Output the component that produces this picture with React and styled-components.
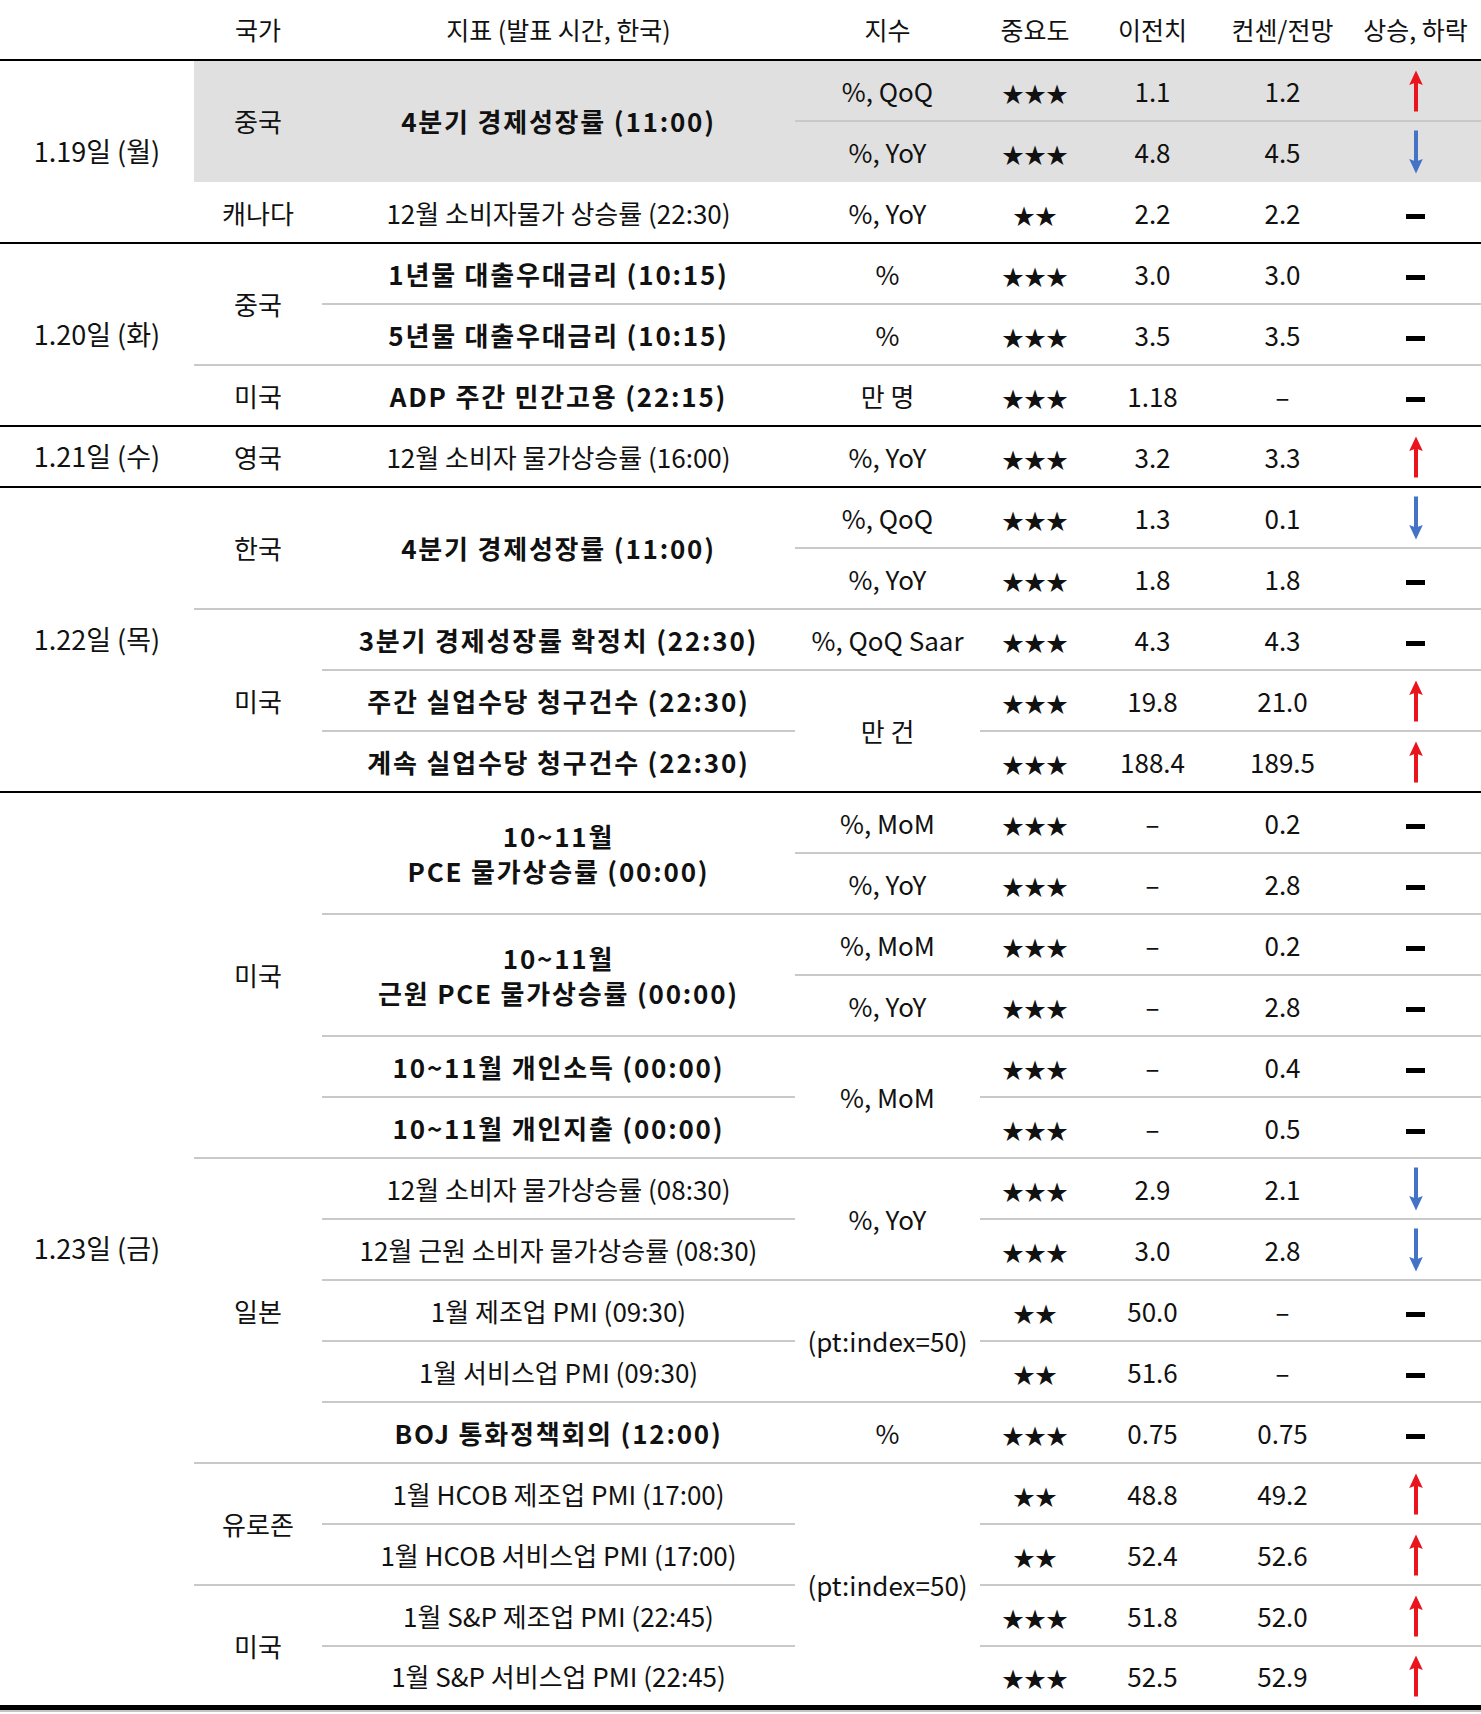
import React from "react";
import styled, { createGlobalStyle } from "styled-components";

const GlobalStyle = createGlobalStyle`
  html, body { margin: 0; padding: 0; background: #fff; }
  * { box-sizing: border-box; }
`;

const Frame = styled.div`
  width: 1481px;
  border-bottom: 2px solid #c4c4c4;
`;

const Table = styled.table`
  width: 1481px;
  border-collapse: collapse;
  table-layout: fixed;
  font-family: "Noto Sans CJK KR", "Noto Sans", sans-serif;
  color: #111;
  font-size: 26px;
`;

const HeadCell = styled.th`
  height: 60px;
  padding: 0 0 2px;
  font-weight: 400;
  font-size: 25px;
  text-align: center;
  vertical-align: middle;
  border-bottom: 2.5px solid #000;
  white-space: nowrap;
`;

const lines = {
  gray: "2px solid #c9c9c9",
  black: "2.5px solid #000",
  end: "5px solid #000",
  none: "2px solid transparent",
};

const Cell = styled.td`
  height: 61px;
  padding: 0;
  text-align: center;
  vertical-align: middle;
  white-space: pre-line;
  line-height: 1.36;
  background: ${(p) => (p.$shade ? "#e0e0e0" : "transparent")};
  border-bottom: ${(p) => lines[p.$line]};
  font-weight: ${(p) => (p.$bold ? 700 : 400)};
  letter-spacing: ${(p) => (p.$bold ? "1.8px" : "0")};
`;

const DateCell = styled(Cell)`
  font-size: 27px;
`;

const Stars = styled.span`
  font-size: 22px;
  letter-spacing: 0;
  font-family: "Noto Sans CJK KR", sans-serif;
`;

const Flat = styled.span`
  display: inline-block;
  width: 19px;
  height: 5px;
  background: #000;
  vertical-align: middle;
`;

const ArrowBox = styled.svg`
  display: block;
  margin: 0 auto;
`;

const Arrow = ({ dir }) => {
  if (dir === "flat") return <Flat />;
  if (dir === "up")
    return (
      <ArrowBox width="16" height="42" viewBox="0 0 16 42">
        <path d="M8 0.5 L14.8 15 L10 13.2 L10 41.5 L6 41.5 L6 13.2 L1.2 15 Z" fill="#ea141d" />
      </ArrowBox>
    );
  return (
    <ArrowBox width="16" height="44" viewBox="0 0 16 44">
      <path d="M8 43.5 L14.8 29 L10 30.8 L10 0.5 L6 0.5 L6 30.8 L1.2 29 Z" fill="#4472c4" />
    </ArrowBox>
  );
};

const N = "–";

const data = [
  {
    date: "1.19일 (월)",
    rows: [
      { shade: true, country: ["중국", 2], ind: ["4분기 경제성장률 (11:00)", 2, true], unit: ["%, QoQ"], imp: 3, prev: "1.1", cons: "1.2", dir: "up" },
      { shade: true, unit: ["%, YoY"], imp: 3, prev: "4.8", cons: "4.5", dir: "down", noLine: true },
      { country: ["캐나다"], ind: ["12월 소비자물가 상승률 (22:30)"], unit: ["%, YoY"], imp: 2, prev: "2.2", cons: "2.2", dir: "flat" },
    ],
  },
  {
    date: "1.20일 (화)",
    rows: [
      { country: ["중국", 2], ind: ["1년물 대출우대금리 (10:15)", 1, true], unit: ["%"], imp: 3, prev: "3.0", cons: "3.0", dir: "flat" },
      { ind: ["5년물 대출우대금리 (10:15)", 1, true], unit: ["%"], imp: 3, prev: "3.5", cons: "3.5", dir: "flat" },
      { country: ["미국"], ind: ["ADP 주간 민간고용 (22:15)", 1, true], unit: ["만 명"], imp: 3, prev: "1.18", cons: N, dir: "flat" },
    ],
  },
  {
    date: "1.21일 (수)",
    rows: [
      { country: ["영국"], ind: ["12월 소비자 물가상승률 (16:00)"], unit: ["%, YoY"], imp: 3, prev: "3.2", cons: "3.3", dir: "up" },
    ],
  },
  {
    date: "1.22일 (목)",
    rows: [
      { country: ["한국", 2], ind: ["4분기 경제성장률 (11:00)", 2, true], unit: ["%, QoQ"], imp: 3, prev: "1.3", cons: "0.1", dir: "down" },
      { unit: ["%, YoY"], imp: 3, prev: "1.8", cons: "1.8", dir: "flat" },
      { country: ["미국", 3], ind: ["3분기 경제성장률 확정치 (22:30)", 1, true], unit: ["%, QoQ Saar"], imp: 3, prev: "4.3", cons: "4.3", dir: "flat" },
      { ind: ["주간 실업수당 청구건수 (22:30)", 1, true], unit: ["만 건", 2], imp: 3, prev: "19.8", cons: "21.0", dir: "up" },
      { ind: ["계속 실업수당 청구건수 (22:30)", 1, true], imp: 3, prev: "188.4", cons: "189.5", dir: "up" },
    ],
  },
  {
    date: "1.23일 (금)",
    rows: [
      { country: ["미국", 6], ind: ["10~11월\nPCE 물가상승률 (00:00)", 2, true], unit: ["%, MoM"], imp: 3, prev: N, cons: "0.2", dir: "flat" },
      { unit: ["%, YoY"], imp: 3, prev: N, cons: "2.8", dir: "flat" },
      { ind: ["10~11월\n근원 PCE 물가상승률 (00:00)", 2, true], unit: ["%, MoM"], imp: 3, prev: N, cons: "0.2", dir: "flat" },
      { unit: ["%, YoY"], imp: 3, prev: N, cons: "2.8", dir: "flat" },
      { ind: ["10~11월 개인소득 (00:00)", 1, true], unit: ["%, MoM", 2], imp: 3, prev: N, cons: "0.4", dir: "flat" },
      { ind: ["10~11월 개인지출 (00:00)", 1, true], imp: 3, prev: N, cons: "0.5", dir: "flat" },
      { country: ["일본", 5], ind: ["12월 소비자 물가상승률 (08:30)"], unit: ["%, YoY", 2], imp: 3, prev: "2.9", cons: "2.1", dir: "down" },
      { ind: ["12월 근원 소비자 물가상승률 (08:30)"], imp: 3, prev: "3.0", cons: "2.8", dir: "down" },
      { ind: ["1월 제조업 PMI (09:30)"], unit: ["(pt:index=50)", 2], imp: 2, prev: "50.0", cons: N, dir: "flat" },
      { ind: ["1월 서비스업 PMI (09:30)"], imp: 2, prev: "51.6", cons: N, dir: "flat" },
      { ind: ["BOJ 통화정책회의 (12:00)", 1, true], unit: ["%"], imp: 3, prev: "0.75", cons: "0.75", dir: "flat" },
      { country: ["유로존", 2], ind: ["1월 HCOB 제조업 PMI (17:00)"], unit: ["(pt:index=50)", 4], imp: 2, prev: "48.8", cons: "49.2", dir: "up" },
      { ind: ["1월 HCOB 서비스업 PMI (17:00)"], imp: 2, prev: "52.4", cons: "52.6", dir: "up" },
      { country: ["미국", 2], ind: ["1월 S&P 제조업 PMI (22:45)"], imp: 3, prev: "51.8", cons: "52.0", dir: "up" },
      { ind: ["1월 S&P 서비스업 PMI (22:45)"], imp: 3, prev: "52.5", cons: "52.9", dir: "up" },
    ],
  },
];

const widths = [194, 128, 473, 185, 110, 125, 135, 131];
const heads = ["", "국가", "지표 (발표 시간, 한국)", "지수", "중요도", "이전치", "컨센/전망", "상승, 하락"];

function lineFor(group, gi, endRow) {
  const last = endRow === group.rows.length - 1;
  if (last) return gi === data.length - 1 ? "end" : "black";
  if (group.rows[endRow].noLine) return "none";
  return "gray";
}

export default function App() {
  return (
    <Frame>
      <GlobalStyle />
      <Table>
        <colgroup>
          {widths.map((w, i) => (
            <col key={i} style={{ width: w }} />
          ))}
        </colgroup>
        <thead>
          <tr>
            {heads.map((h, i) => (
              <HeadCell key={i}>{h}</HeadCell>
            ))}
          </tr>
        </thead>
        <tbody>
          {data.map((group, gi) =>
            group.rows.map((row, ri) => {
              const line = lineFor(group, gi, ri);
              return (
                <tr key={`${gi}-${ri}`}>
                  {ri === 0 && (
                    <DateCell rowSpan={group.rows.length} $line={lineFor(group, gi, group.rows.length - 1)}>
                      {group.date}
                    </DateCell>
                  )}
                  {row.country && (
                    <Cell
                      rowSpan={row.country[1] || 1}
                      $shade={row.shade}
                      $line={lineFor(group, gi, ri + (row.country[1] || 1) - 1)}
                    >
                      {row.country[0]}
                    </Cell>
                  )}
                  {row.ind && (
                    <Cell
                      rowSpan={row.ind[1] || 1}
                      $shade={row.shade}
                      $bold={row.ind[2]}
                      $line={lineFor(group, gi, ri + (row.ind[1] || 1) - 1)}
                    >
                      {row.ind[0]}
                    </Cell>
                  )}
                  {row.unit && (
                    <Cell
                      rowSpan={row.unit[1] || 1}
                      $shade={row.shade}
                      $line={lineFor(group, gi, ri + (row.unit[1] || 1) - 1)}
                    >
                      {row.unit[0]}
                    </Cell>
                  )}
                  <Cell $shade={row.shade} $line={line}>
                    <Stars>{"★".repeat(row.imp)}</Stars>
                  </Cell>
                  <Cell $shade={row.shade} $line={line}>{row.prev}</Cell>
                  <Cell $shade={row.shade} $line={line}>{row.cons}</Cell>
                  <Cell $shade={row.shade} $line={line}>
                    <Arrow dir={row.dir} />
                  </Cell>
                </tr>
              );
            })
          )}
        </tbody>
      </Table>
    </Frame>
  );
}
